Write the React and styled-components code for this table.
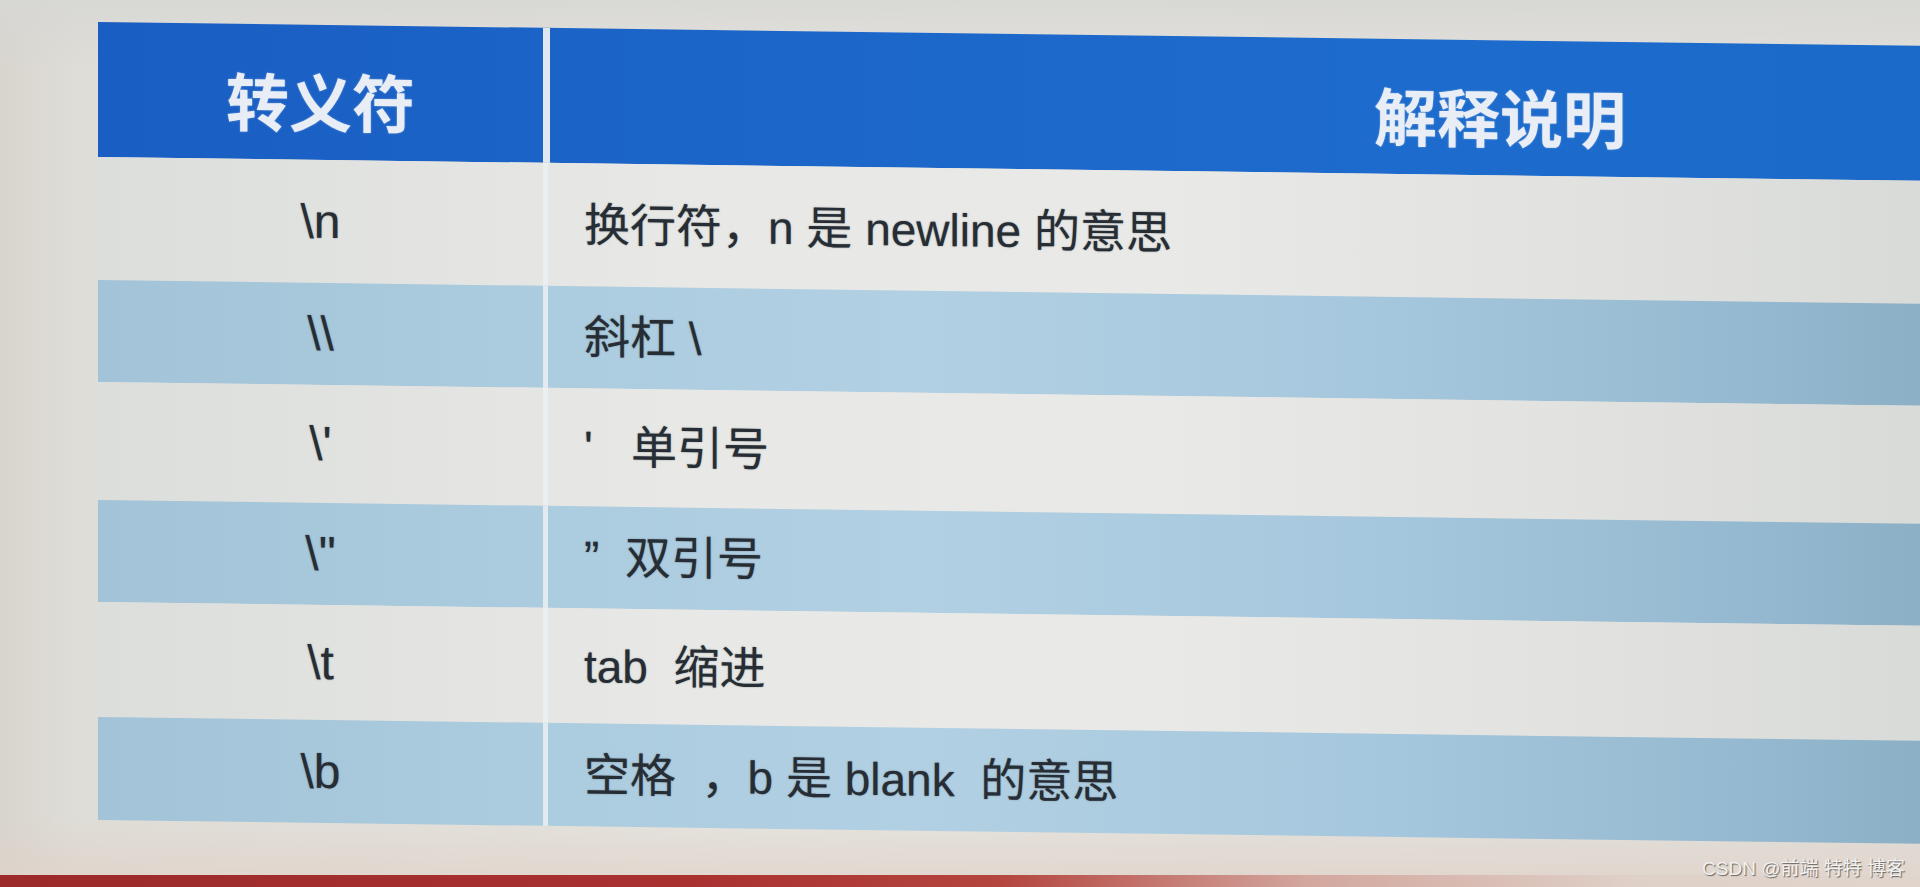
import React from "react";
import styled, { createGlobalStyle } from "styled-components";

const GlobalStyle = createGlobalStyle`
  html, body {
    margin: 0;
    padding: 0;
    width: 1920px;
    height: 887px;
    overflow: hidden;
    background: #dedcd6;
  }
  #root {
    width: 1920px;
    height: 887px;
  }
`;

const Page = styled.div`
  position: relative;
  box-sizing: border-box;
  width: 1920px;
  height: 887px;
  overflow: hidden;
  display: flex;
  flex-direction: column;
  padding-top: 22px;
  background:
    linear-gradient(180deg, rgba(215, 215, 212, 0.9) 0%, rgba(226, 223, 216, 0) 8%, rgba(226, 220, 212, 0) 92%, rgba(224, 208, 198, 0.7) 100%),
    linear-gradient(90deg, #d8d5ce 0%, #dfddd7 4%, #e5e3de 40%, #e0ded9 100%);
  font-family: "Liberation Sans", "Noto Sans CJK SC", sans-serif;
`;

const Table = styled.div`
  margin-left: 98px;
  width: 2352px;
  display: flex;
  flex-direction: column;
  transform: skewY(0.75deg);
  transform-origin: 0 0;
`;

const tones = {
  head: "linear-gradient(90deg, #1a5ec3 0%, #1c66c9 30%, #1d6bcd 55%, #1b69c8 77%, #1a66c4 100%)",
  white: "linear-gradient(90deg, #dcdedc 0%, #e8e9e6 25%, #e9eae7 45%, #e2e3e0 62%, #d9dbd8 77%, #d6d8d5 100%)",
  blue: "linear-gradient(90deg, #a3c3d8 0%, #acccdf 20%, #b2d0e3 35%, #a5c7dd 55%, #95b9d0 70%, #8cb0c6 77%, #89adc3 100%)",
};

const Row = styled.div`
  display: flex;
  height: ${(p) => p.$h}px;
  background: ${(p) => tones[p.$tone]};
`;

const KeyCell = styled.div`
  width: 445px;
  flex: none;
  display: flex;
  align-items: center;
  justify-content: center;
  box-sizing: border-box;
`;

const DescCell = styled.div`
  flex: 1;
  display: flex;
  align-items: center;
  box-sizing: border-box;
  border-left: ${(p) => (p.$head ? "7px solid #dfe7ef" : "5px solid rgba(236, 240, 242, 0.85)")};
  justify-content: ${(p) => (p.$head ? "center" : "flex-start")};
  padding-left: ${(p) => (p.$head ? 0 : 36)}px;
`;

const HeadText = styled.span`
  font-family: "Noto Sans CJK SC", sans-serif;
  font-weight: 700;
  font-size: 63px;
  line-height: 1;
  color: #e9eef6;
  padding-top: 14px;
  text-shadow: 0 0 2px rgba(230, 238, 250, 0.5);
`;

const BodyText = styled.span`
  font-family: "Liberation Sans", "Noto Sans CJK SC", sans-serif;
  font-size: 46px;
  line-height: 1;
  color: #272d34;
  white-space: pre;
  text-shadow: 0 0 1.5px rgba(40, 46, 54, 0.55);
`;

const KeyText = styled(BodyText)`
  font-size: 48px;
`;

const Spacer = styled.div`
  flex: 1;
`;

const RedBand = styled.div`
  height: 12px;
  background: linear-gradient(90deg, #9c2a2b 0%, #a83130 35%, #b4443e 52%, rgba(196, 120, 110, 0.5) 68%, rgba(214, 178, 168, 0.15) 85%, rgba(214, 178, 168, 0) 100%);
`;

const Watermark = styled.div`
  position: absolute;
  right: 15px;
  bottom: 9px;
  font-family: "Liberation Sans", "Noto Sans CJK SC", sans-serif;
  font-size: 19px;
  line-height: 1;
  color: #f1f1f1;
  text-shadow: 1px 1px 1px rgba(0, 0, 0, 0.55);
  white-space: pre;
`;

const rows = [
  { key: "\\n", desc: "换行符，n 是 newline 的意思", tone: "white", h: 123 },
  { key: "\\\\", desc: "斜杠 \\", tone: "blue", h: 102 },
  { key: "\\'", desc: "'   单引号", tone: "white", h: 118 },
  { key: '\\"', desc: "”  双引号", tone: "blue", h: 102 },
  { key: "\\t", desc: "tab  缩进", tone: "white", h: 115 },
  { key: "\\b", desc: "空格  ，b 是 blank  的意思", tone: "blue", h: 103 },
];

export default function App() {
  return (
    <>
      <GlobalStyle />
      <Page>
        <Table>
          <Row $tone="head" $h={135}>
            <KeyCell>
              <HeadText>转义符</HeadText>
            </KeyCell>
            <DescCell $head>
              <HeadText>解释说明</HeadText>
            </DescCell>
          </Row>
          {rows.map((r) => (
            <Row key={r.key} $tone={r.tone} $h={r.h}>
              <KeyCell>
                <KeyText>{r.key}</KeyText>
              </KeyCell>
              <DescCell>
                <BodyText>{r.desc}</BodyText>
              </DescCell>
            </Row>
          ))}
        </Table>
        <Spacer />
        <RedBand />
        <Watermark>CSDN @前端 特特 博客</Watermark>
      </Page>
    </>
  );
}
